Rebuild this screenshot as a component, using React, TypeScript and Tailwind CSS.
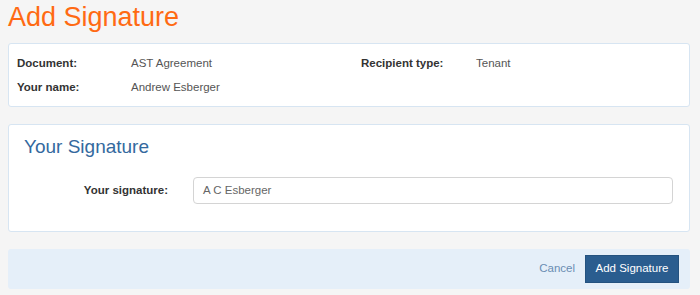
import React from "react";

export default function App() {
  const font = { fontFamily: '"Liberation Sans", Arial, sans-serif' };
  return (
    <div className="min-h-[295px] w-[700px] bg-[#f5f5f5] pl-[8px] pr-[10px]" style={font}>
      <h1 className="pt-[3px] text-[27px] leading-[29px] text-[#ff6a13] h-[43px]">Add Signature</h1>

      <div className="rounded-[3px] border border-[#d7e5f2] bg-white px-[8px] py-[9px]">
        <div className="grid grid-cols-[114px_230px_115px_1fr] gap-y-[4px] text-[11.5px] leading-[20px]">
          <div className="font-bold text-[#333]">Document:</div>
          <div className="text-[#555]">AST Agreement</div>
          <div className="font-bold text-[#333]">Recipient type:</div>
          <div className="text-[#555]">Tenant</div>
          <div className="font-bold text-[#333]">Your name:</div>
          <div className="text-[#555]">Andrew Esberger</div>
          <div></div>
          <div></div>
        </div>
      </div>

      <div className="mt-[17px] rounded-[3px] border border-[#d7e5f2] bg-white pt-[11px] pb-[27px]">
        <h2 className="pl-[15px] text-[19px] leading-[21px] text-[#34699e]">Your Signature</h2>
        <div className="mt-[20px] flex items-center pr-[16px]">
          <label className="w-[159px] text-right text-[11.5px] font-bold text-[#333]">Your signature:</label>
          <div className="ml-[25px] flex h-[27px] flex-1 items-center rounded-[4px] border border-[#d4d4d4] bg-white pl-[9px] text-[11.5px] text-[#666]">
            A C Esberger
          </div>
        </div>
      </div>

      <div className="mt-[17px] flex h-[40px] items-center justify-end rounded-[3px] bg-[#e5eff9] pr-[11px]">
        <span className="text-[11.5px] text-[#6a8db3]">Cancel</span>
        <button className="ml-[10px] h-[28px] w-[94px] border border-[#24527f] bg-[#2a5d8f] text-[11.5px] text-white">
          Add Signature
        </button>
      </div>
    </div>
  );
}
